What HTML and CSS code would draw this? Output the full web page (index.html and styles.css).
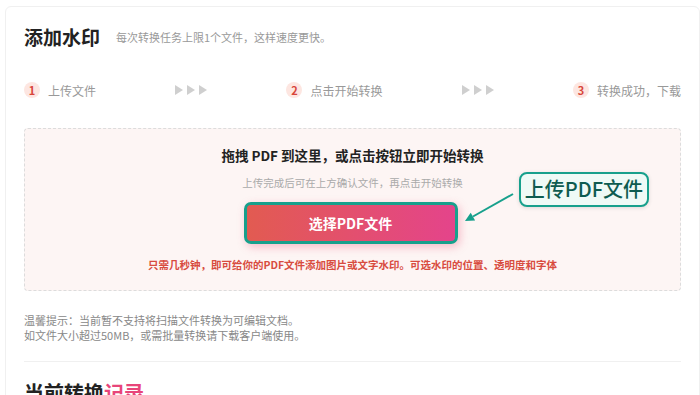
FILE: index.html
```html
<!DOCTYPE html>
<html lang="zh-CN">
<head>
    <meta charset="UTF-8">
    <meta name="viewport" content="width=device-width, initial-scale=1.0">
    <title>添加水印</title>
    <link rel="stylesheet" href="styles.css">
</head>
<body>
    <div class="card">
        <div class="header">
            <h1 class="title">添加水印</h1>
            <span class="subtitle">每次转换任务上限1个文件，这样速度更快。</span>
        </div>

        <div class="steps">
            <div class="step"><span class="num">1</span>上传文件</div>
            <svg class="arrows" width="32" height="10" viewBox="0 0 32 10">
                <polygon points="0,0 8,5 0,10" />
                <polygon points="12,0 20,5 12,10" />
                <polygon points="24,0 32,5 24,10" />
            </svg>
            <div class="step"><span class="num">2</span>点击开始转换</div>
            <svg class="arrows" width="32" height="10" viewBox="0 0 32 10">
                <polygon points="0,0 8,5 0,10" />
                <polygon points="12,0 20,5 12,10" />
                <polygon points="24,0 32,5 24,10" />
            </svg>
            <div class="step"><span class="num">3</span>转换成功，下载</div>
        </div>

        <div class="dropzone">
            <div class="drop-title">拖拽 PDF 到这里，或点击按钮立即开始转换</div>
            <div class="drop-sub">上传完成后可在上方确认文件，再点击开始转换</div>
            <button class="pick-btn">选择PDF文件</button>
            <div class="drop-note">只需几秒钟，即可给你的PDF文件添加图片或文字水印。可选水印的位置、透明度和字体</div>

            <!-- annotation over the button -->
            <svg class="pointer" width="60" height="36" viewBox="0 0 60 36">
                <line x1="52" y1="5" x2="12" y2="27.5" />
                <polygon points="4,32 14.1,31.5 9.7,23.7" />
            </svg>
            <div class="callout">上传PDF文件</div>
        </div>

        <div class="tips">
            温馨提示：当前暂不支持将扫描文件转换为可编辑文档。<br>
            如文件大小超过50MB，或需批量转换请下载客户端使用。
        </div>

        <div class="divider"></div>

        <h2 class="records">当前转换<span>记录</span></h2>
    </div>
</body>
</html>
```

FILE: styles.css
```css
body {
    margin: 0;
    background: #fff;
    overflow: hidden;
    font-family: "Noto Sans CJK SC", "Noto Sans", sans-serif;
    color: #222;
}

.card {
    box-sizing: border-box;
    width: 695px;
    margin: 6px 0 0 5px;
    padding: 16px 18px 0 18px;
    border: 1px solid #f0f0f0;
    border-radius: 6px;
    background: #fff;
}

.header {
    display: flex;
    align-items: center;
    gap: 16px;
    height: 28px;
}

.title {
    margin: 0;
    font-size: 19px;
    font-weight: 700;
    line-height: 28px;
    color: #222;
}

.subtitle {
    font-size: 11px;
    color: #999;
}

.steps {
    display: flex;
    justify-content: space-between;
    align-items: center;
    height: 16px;
    margin-top: 31px;
}

.step {
    display: flex;
    align-items: center;
    gap: 8px;
    font-size: 12px;
    color: #999;
}

.num {
    display: flex;
    justify-content: center;
    align-items: center;
    width: 16px;
    height: 16px;
    border-radius: 50%;
    background: #fde6e1;
    color: #d8453a;
    font-size: 11px;
    font-weight: 700;
}

.arrows {
    fill: #cfcfcf;
}

.dropzone {
    position: relative;
    display: flex;
    flex-direction: column;
    align-items: center;
    margin-top: 30px;
    padding: 16px 0 17px;
    border: 1px dashed #dcdcdc;
    border-radius: 4px;
    background: #fdf5f4;
}

.drop-title {
    font-size: 13.5px;
    font-weight: 700;
    line-height: 20px;
    color: #222;
}

.drop-sub {
    margin-top: 10px;
    font-size: 10.5px;
    line-height: 16px;
    color: #aaa;
}

.pick-btn {
    box-sizing: border-box;
    width: 214px;
    height: 42px;
    margin-top: 11px;
    margin-right: 4px;
    border: 3px solid #17a08c;
    border-radius: 7px;
    background: linear-gradient(90deg, #e25b51, #e4448b);
    box-shadow: 2px 3px 8px rgba(232, 80, 120, 0.35);
    color: #fff;
    font-family: inherit;
    font-size: 14px;
    font-weight: 700;
}

.drop-note {
    margin-top: 13px;
    font-size: 10.5px;
    font-weight: 600;
    line-height: 16px;
    color: #d84c3f;
}

.pointer {
    position: absolute;
    left: 436px;
    top: 60px;
}

.pointer line {
    stroke: #17a08c;
    stroke-width: 2;
}

.pointer polygon {
    fill: #17a08c;
}

.callout {
    position: absolute;
    left: 494px;
    top: 43px;
    box-sizing: border-box;
    width: 130px;
    height: 35px;
    border: 2.5px solid #17a08c;
    border-radius: 8px;
    background: #effaf6;
    box-shadow: 0 1px 4px rgba(0, 0, 0, 0.12);
    color: #0e5c50;
    font-size: 20px;
    font-weight: 500;
    line-height: 30px;
    text-align: center;
}

.tips {
    margin-top: 22px;
    font-size: 11px;
    line-height: 15px;
    color: #888;
}

.divider {
    height: 1px;
    margin-top: 18px;
    background: #f0f0f0;
}

.records {
    margin: 17px 0 0;
    font-size: 20px;
    font-weight: 700;
    line-height: 28px;
}

.records span {
    color: #e8457a;
}
```
